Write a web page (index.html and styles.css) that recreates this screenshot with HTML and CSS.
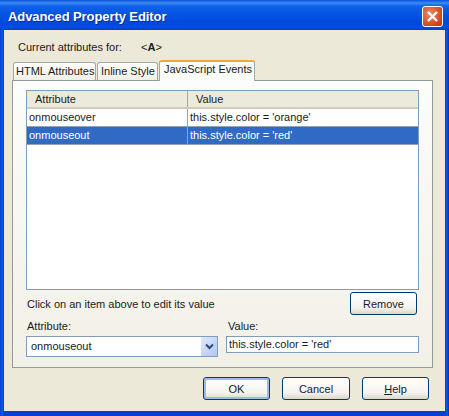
FILE: index.html
```html
<!DOCTYPE html>
<html lang="en">
<head>
<meta charset="utf-8">
<title>Advanced Property Editor</title>
<link rel="stylesheet" href="styles.css">
</head>
<body>
<div class="window">
  <div class="titlebar">
    <span class="title">Advanced Property Editor</span>
    <span class="close"><svg width="13" height="13" viewBox="0 0 13 13"><path d="M2 2L11 11M11 2L2 11" stroke="#fff" stroke-width="2.4" fill="none"/></svg></span>
  </div>
  <div class="client">
    <div class="current"><span class="current-label">Current attributes for:</span><span class="tag">&lt;<b>A</b>&gt;</span></div>
    <div class="tabs">
      <div class="tab tab-html">HTML Attributes</div>
      <div class="tab tab-inline">Inline Style</div>
      <div class="tab tab-active">JavaScript Events</div>
    </div>
    <div class="panel">
      <div class="list">
        <div class="row head"><div class="cell c1">Attribute</div><div class="cell c2">Value</div></div>
        <div class="row item"><div class="cell c1">onmouseover</div><div class="cell c2">this.style.color = 'orange'</div></div>
        <div class="row item selected"><div class="cell c1">onmouseout</div><div class="cell c2">this.style.color = 'red'</div></div>
      </div>
      <div class="hint-row">
        <span>Click on an item above to edit its value</span>
        <button class="btn btn-remove">Remove</button>
      </div>
      <div class="fields">
        <div class="field field-attr">
          <label class="field-label">Attribute:</label>
          <div class="combo"><span>onmouseout</span><span class="arrow"><svg width="9" height="7" viewBox="0 0 9 7"><path d="M1 1.5L4.5 5L8 1.5" stroke="#2a4a86" stroke-width="2" fill="none"/></svg></span></div>
        </div>
        <div class="field field-value">
          <label class="field-label">Value:</label>
          <div class="textbox">this.style.color = 'red'</div>
        </div>
      </div>
    </div>
    <div class="actions">
      <button class="btn btn-ok">OK</button>
      <button class="btn btn-cancel">Cancel</button>
      <button class="btn"><u>H</u>elp</button>
    </div>
  </div>
</div>
</body>
</html>
```
FILE: styles.css
```css
* { box-sizing: border-box; }
html, body { margin: 0; padding: 0; }
body { width: 449px; height: 416px; overflow: hidden; font-family: "Liberation Sans", Arial, sans-serif; font-size: 11px; color: #1a1a1a; }
.window { width: 449px; height: 416px; display: flex; flex-direction: column; background: linear-gradient(90deg, #0a3fd0 0, #0a5ae8 2px, #0a3fd0 4px, #0a3fd0 445px, #0a5ae8 447px, #0030b0 449px); }
.titlebar { height: 30px; flex: none; display: flex; align-items: center; justify-content: space-between; padding: 3px 6px 0 8px; background: linear-gradient(180deg, #0a50d8 0, #3a8cf4 3px, #0f62ea 6px, #0454e4 14px, #0048d8 24px, #0050e6 27px, #0040c0 30px); }
.title { color: #fff; font-weight: bold; font-size: 13px; letter-spacing: -0.08px; text-shadow: 1px 1px 0 #0a2a90; }
.close { width: 21px; height: 21px; display: flex; align-items: center; justify-content: center; border: 1px solid #fff; border-radius: 3px; background: radial-gradient(circle at 35% 35%, #e88a6a, #d2461e 70%, #b8300e); }
.client { height: 381px; flex: none; margin: 0 4px; background: #ece9d8; padding: 0 12px 0 8px; display: flex; flex-direction: column; }
.current { display: flex; height: 30px; padding: 10px 6px 0; line-height: 14px; }
.current-label { width: 123px; }
.tabs { display: flex; height: 20px; padding-left: 1px; align-items: flex-end; position: relative; }
.tab { height: 18px; padding: 1px 0 0 2px; line-height: 15px; white-space: nowrap; background: linear-gradient(180deg, #fff, #f0efe6); border: 1px solid #a0a8a8; border-bottom: 0; border-radius: 3px 3px 0 0; margin-right: 1px; }
.tab-html { width: 83px; }
.tab-inline { width: 61px; padding-left: 3px; }
.tab-active { width: 96px; height: 21px; background: #fbfbf8; border-top: 2px solid #f2a63a; margin-bottom: -1px; z-index: 1; padding: 0 0 0 4px; line-height: 14px; }
.panel { height: 288px; flex: none; background: linear-gradient(180deg, #fcfcfa, #f2f0e6); border: 1px solid #919b9c; padding: 9px 13px 0; display: flex; flex-direction: column; }
.list { height: 200px; flex: none; background: #fff; border: 1px solid #7f9db9; }
.row { display: flex; }
.head { height: 18px; background: #ebeadb; border-bottom: 2px solid #d0cdbc; }
.item { height: 18px; line-height: 17px; border-bottom: 1px solid #8fa4ba; }
.selected { background: #316ac5; color: #fff; }
.cell { padding: 0 2px; white-space: nowrap; }
.c1 { width: 161px; border-right: 1px solid #8fa4ba; }
.head .cell { padding-left: 8px; line-height: 17px; }
.head .c1 { border-right-color: #aca899; }
.c2 { flex: 1; }
.hint-row { display: flex; justify-content: space-between; align-items: center; height: 23px; padding: 0 2px 0 1px; margin-top: 2px; }
.btn { font: inherit; color: inherit; width: 67px; height: 23px; padding: 0; background: linear-gradient(180deg, #fff, #f4f3ee 70%, #dcd8c8); border: 1px solid #003c74; border-radius: 3px; }
.fields { display: flex; justify-content: space-between; margin-top: 4px; }
.field-label { display: block; height: 17px; line-height: 15px; padding-left: 1px; }
.field-attr { width: 192px; }
.field-value { width: 193px; }
.field-value .field-label { padding-left: 2px; }
.combo { height: 21px; display: flex; justify-content: space-between; align-items: stretch; background: #fff; border: 1px solid #7f9db9; line-height: 19px; padding: 0 0 0 4px; }
.arrow { width: 16px; display: flex; align-items: center; justify-content: center; background: linear-gradient(135deg, #dfe8fb, #b4c7ee); }
.textbox { height: 17px; background: #fff; border: 1px solid #7f9db9; line-height: 15px; padding-left: 2px; }
.actions { display: flex; justify-content: flex-end; gap: 12px; padding: 9px 4px 0 0; }
.btn-cancel { width: 68px; }
.btn-ok { box-shadow: inset 0 0 0 2px #9dbbe8; }
```
